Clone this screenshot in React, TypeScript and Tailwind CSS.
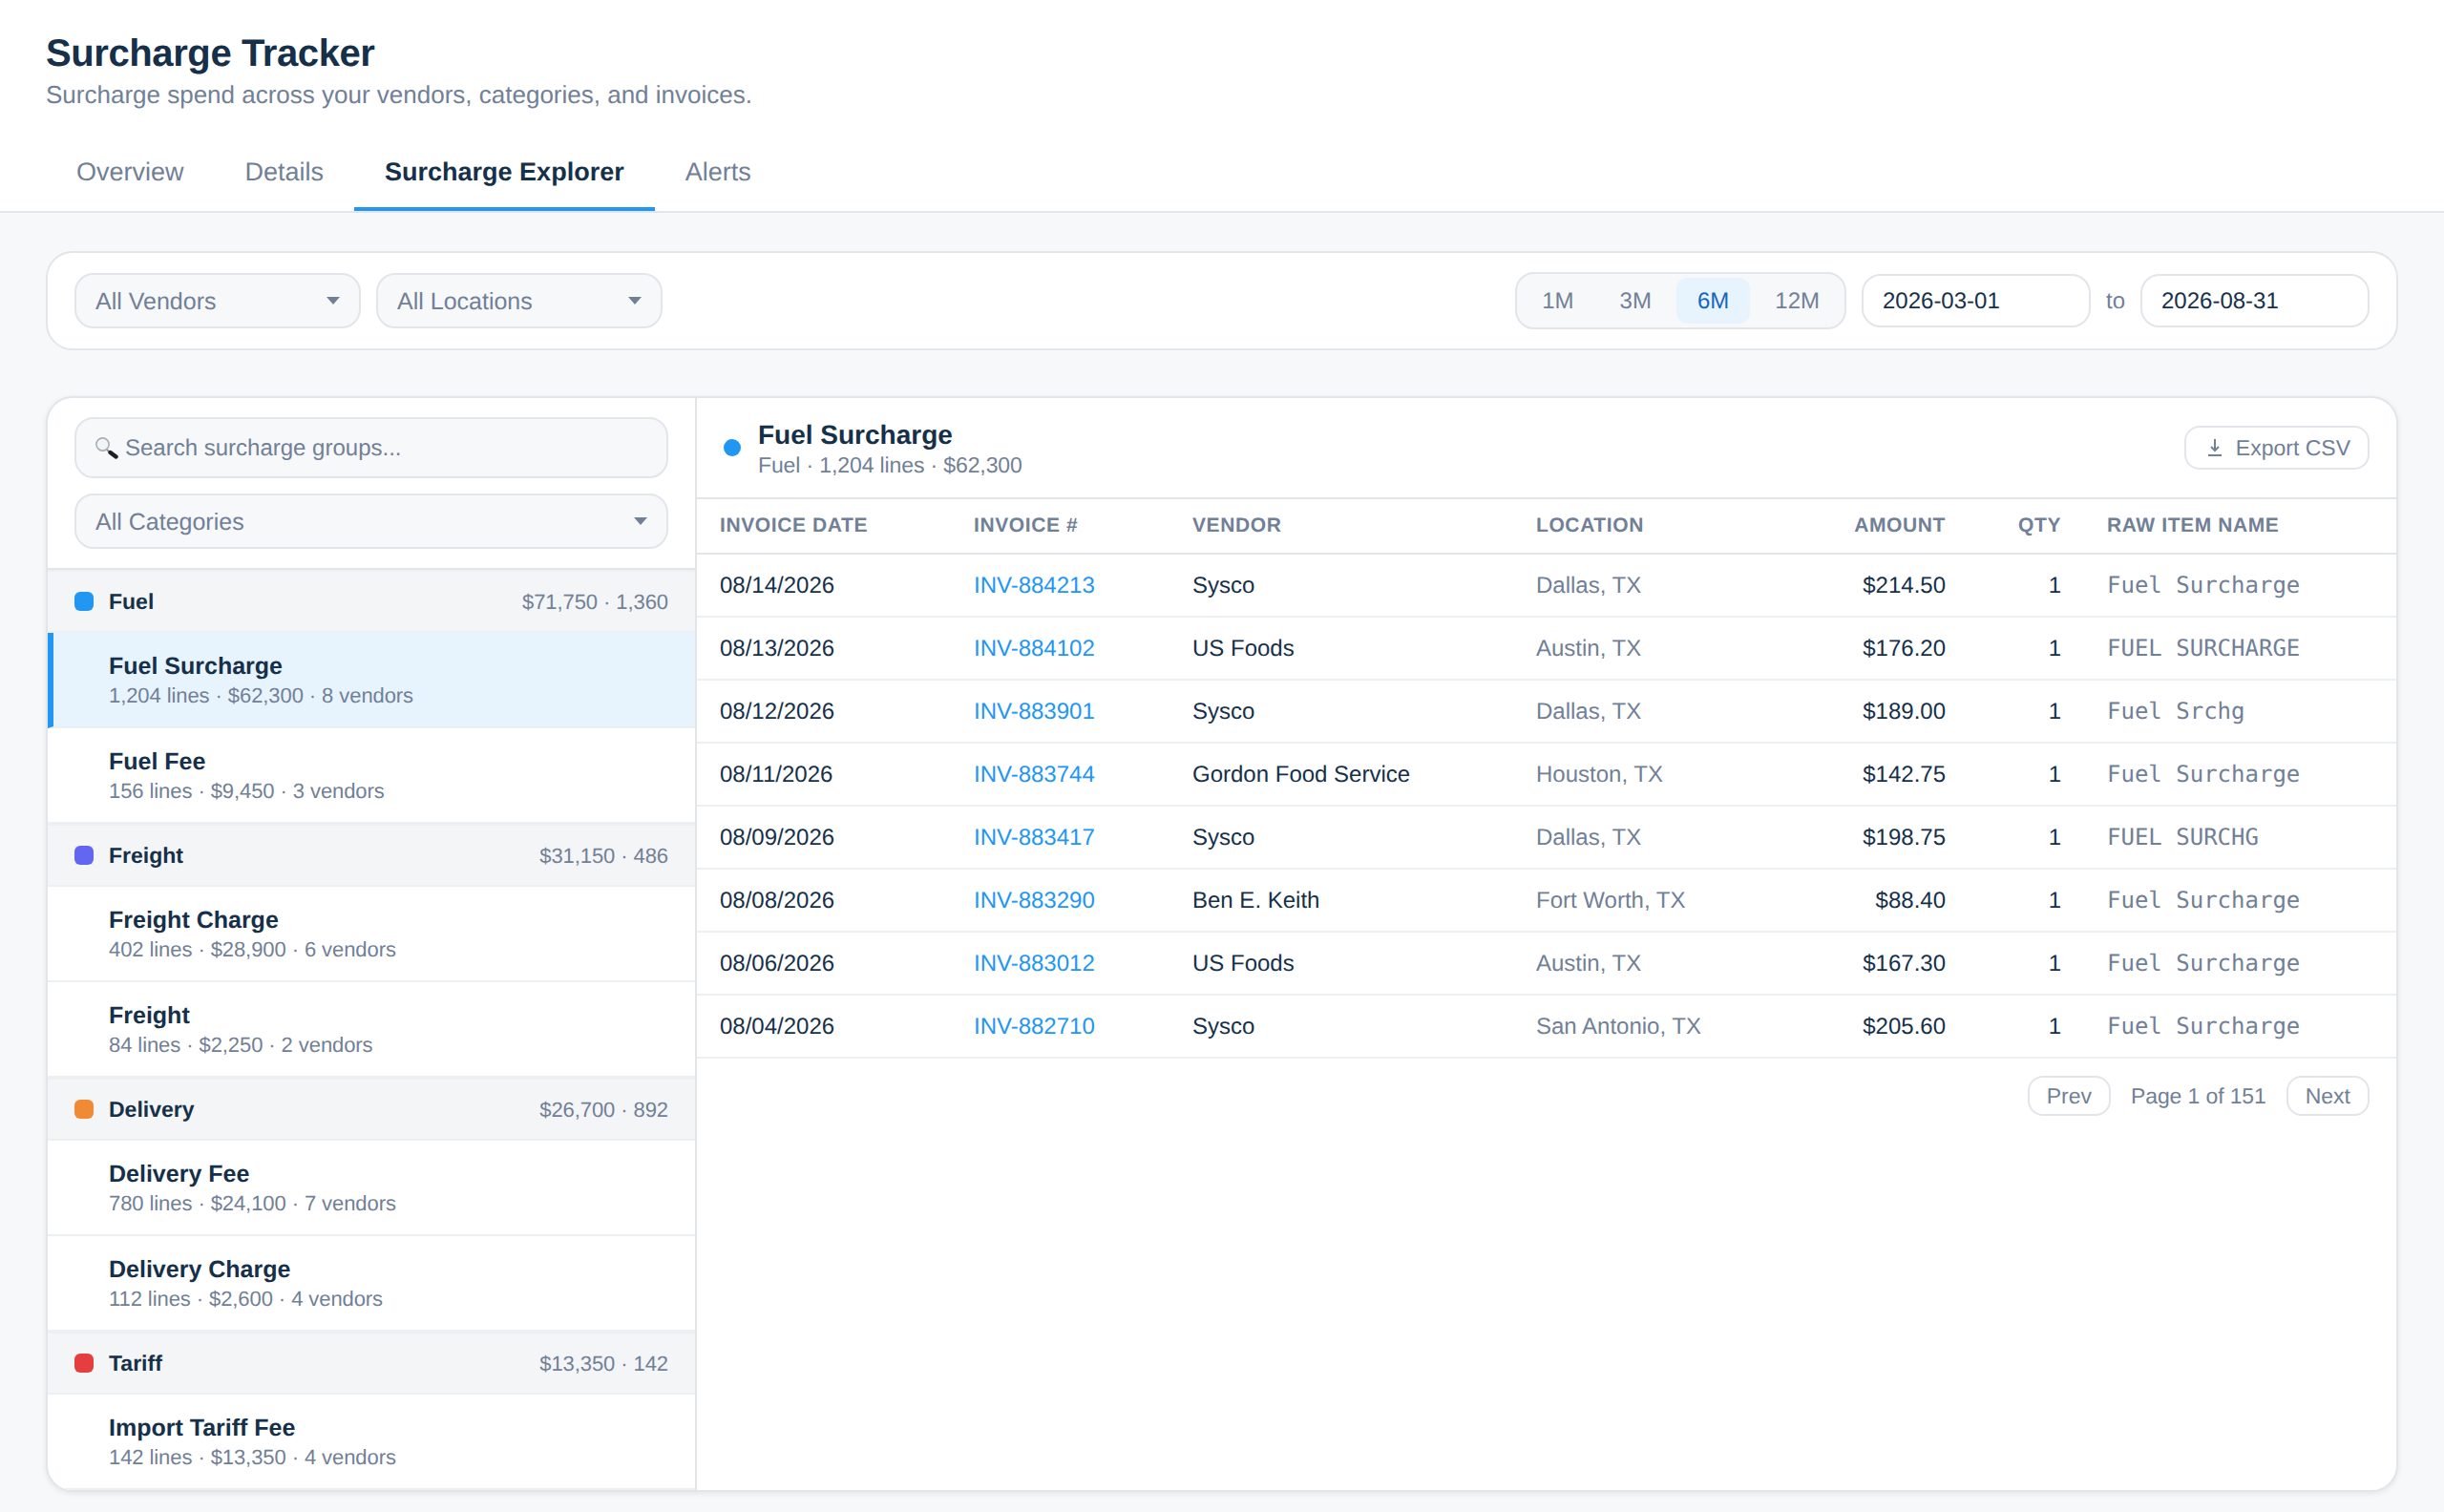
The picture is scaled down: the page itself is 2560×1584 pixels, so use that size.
const tabs = ['Overview', 'Details', 'Surcharge Explorer', 'Alerts'];
const periods = ['1M', '3M', '6M', '12M'];

const groups = [
  {
    name: 'Fuel',
    stats: '$71,750 · 1,360',
    dot: 'bg-[#2196f3]',
    items: [
      { name: 'Fuel Surcharge', meta: '1,204 lines · $62,300 · 8 vendors', active: true },
      { name: 'Fuel Fee', meta: '156 lines · $9,450 · 3 vendors' },
    ],
  },
  {
    name: 'Freight',
    stats: '$31,150 · 486',
    dot: 'bg-[#6366f1]',
    items: [
      { name: 'Freight Charge', meta: '402 lines · $28,900 · 6 vendors' },
      { name: 'Freight', meta: '84 lines · $2,250 · 2 vendors' },
    ],
  },
  {
    name: 'Delivery',
    stats: '$26,700 · 892',
    dot: 'bg-[#f08a34]',
    items: [
      { name: 'Delivery Fee', meta: '780 lines · $24,100 · 7 vendors' },
      { name: 'Delivery Charge', meta: '112 lines · $2,600 · 4 vendors' },
    ],
  },
  {
    name: 'Tariff',
    stats: '$13,350 · 142',
    dot: 'bg-[#e53e3e]',
    items: [{ name: 'Import Tariff Fee', meta: '142 lines · $13,350 · 4 vendors' }],
  },
];

const rows = [
  ['08/14/2026', 'INV-884213', 'Sysco', 'Dallas, TX', '$214.50', 'Fuel Surcharge'],
  ['08/13/2026', 'INV-884102', 'US Foods', 'Austin, TX', '$176.20', 'FUEL SURCHARGE'],
  ['08/12/2026', 'INV-883901', 'Sysco', 'Dallas, TX', '$189.00', 'Fuel Srchg'],
  ['08/11/2026', 'INV-883744', 'Gordon Food Service', 'Houston, TX', '$142.75', 'Fuel Surcharge'],
  ['08/09/2026', 'INV-883417', 'Sysco', 'Dallas, TX', '$198.75', 'FUEL SURCHG'],
  ['08/08/2026', 'INV-883290', 'Ben E. Keith', 'Fort Worth, TX', '$88.40', 'Fuel Surcharge'],
  ['08/06/2026', 'INV-883012', 'US Foods', 'Austin, TX', '$167.30', 'Fuel Surcharge'],
  ['08/04/2026', 'INV-882710', 'Sysco', 'San Antonio, TX', '$205.60', 'Fuel Surcharge'],
];

function Caret() {
  return (
    <svg width="14" height="8" viewBox="0 0 14 8" className="shrink-0">
      <path d="M0 0h14L7 8z" fill="#718096" />
    </svg>
  );
}

function SearchGlyph() {
  return (
    <svg width="24" height="23" viewBox="0 0 24 23" className="shrink-0">
      <path d="M12 13l3 3" stroke="#8f959b" strokeWidth="2" />
      <path d="M15.5 16l6 4.5" stroke="#1f1f22" strokeWidth="4.4" strokeLinecap="round" />
      <circle cx="7.5" cy="7.5" r="6.6" fill="#f1f5f8" stroke="#a9aeb4" strokeWidth="1.6" />
    </svg>
  );
}

function ExportGlyph() {
  return (
    <svg width="14" height="18" viewBox="0 0 14 18" fill="none" stroke="#718096" strokeWidth="2" className="shrink-0">
      <path d="M7 0v12M3 8l4 4 4-4M0 17h14" />
    </svg>
  );
}

function SelectBox({ label, className }: { label: string; className: string }) {
  return (
    <div className={`flex items-center justify-between rounded-[20px] border-2 border-[#e2e5ea] bg-[#f7f8fa] pl-[20px] pr-[20px] text-[25px] text-[#718096] ${className}`}>
      <span className="pt-[3px]">{label}</span>
      <Caret />
    </div>
  );
}

export default function App() {
  return (
    <div className="flex min-h-[1584px] flex-col bg-[#f7f8fa] font-['Liberation_Sans',sans-serif] text-[#16304a] [text-rendering:geometricPrecision]">
      {/* Header + tabs */}
      <header className="border-b-2 border-[#e2e5ea] bg-white px-[48px] pt-[32px]">
        <h1 className="text-[40px] leading-[48px] font-bold tracking-[-0.4px]">Surcharge Tracker</h1>
        <p className="mt-[3px] text-[26px] leading-[32px] text-[#718096]">
          Surcharge spend across your vendors, categories, and invoices.
        </p>
        <nav className="mt-[26px] flex">
          {tabs.map((tab) => (
            <div
              key={tab}
              className={`border-b-4 px-[32px] pt-[23px] pb-[21px] text-[27px] leading-[32px] ${
                tab === 'Surcharge Explorer'
                  ? 'border-[#2196f3] font-bold text-[#16304a]'
                  : 'border-transparent text-[#718096]'
              }`}
            >
              {tab}
            </div>
          ))}
        </nav>
      </header>

      <main className="px-[48px] pt-[40px]">
        {/* Filter bar */}
        <div className="flex items-center justify-between rounded-[28px] border-2 border-[#e2e5ea] bg-white px-[28px] py-[20px]">
          <div className="flex gap-[16px]">
            <SelectBox label="All Vendors" className="h-[58px] w-[300px]" />
            <SelectBox label="All Locations" className="h-[58px] w-[300px]" />
          </div>
          <div className="flex items-center">
            <div className="flex h-[60px] items-center gap-[4px] rounded-[20px] border-2 border-[#e2e5ea] bg-[#f7f8fa] p-[4px]">
              {periods.map((p) => (
                <div
                  key={p}
                  className={`flex h-[48px] items-center rounded-[12px] px-[22px] pt-[2px] text-[24px] ${
                    p === '6M' ? 'bg-[#e8f4fd] text-[#1565c0]' : 'text-[#718096]'
                  }`}
                >
                  {p}
                </div>
              ))}
            </div>
            <div className="ml-[16px] flex h-[56px] w-[240px] items-center rounded-[20px] border-2 border-[#e2e5ea] px-[20px] pt-[2px] text-[24px]">
              2026-03-01
            </div>
            <span className="mx-[16px] pt-[2px] text-[24px] text-[#718096]">to</span>
            <div className="flex h-[56px] w-[240px] items-center rounded-[20px] border-2 border-[#e2e5ea] px-[20px] pt-[2px] text-[24px]">
              2026-08-31
            </div>
          </div>
        </div>

        {/* Explorer panel */}
        <div className="mt-[48px] flex h-[1148px] overflow-hidden rounded-[28px] border-2 border-[#e2e5ea] bg-white shadow-[0_2px_6px_rgba(0,0,0,0.08)]">
          <aside className="w-[680px] shrink-0 border-r-2 border-[#e2e5ea]">
            <div className="flex h-[180px] flex-col gap-[16px] border-b-2 border-[#e2e5ea] px-[28px] pt-[20px]">
              <div className="flex h-[64px] items-center gap-[7px] rounded-[20px] border-2 border-[#e2e5ea] bg-[#f7f8fa] pr-[20px] pl-[20px] text-[24px] text-[#718096]">
                <SearchGlyph />
                <span className="pt-[2px]">Search surcharge groups...</span>
              </div>
              <SelectBox label="All Categories" className="h-[58px]" />
            </div>
            {groups.map((group) => (
              <div key={group.name}>
                <div className="flex h-[66px] items-center justify-between border-y-2 border-[#edf0f3] bg-[#f4f5f7] pr-[28px] pl-[28px]">
                  <div className="flex items-center gap-[16px]">
                    <span className={`h-[20px] w-[20px] rounded-[6px] ${group.dot}`} />
                    <span className="text-[23px] font-bold">{group.name}</span>
                  </div>
                  <span className="text-[22px] tracking-[-0.08px] text-[#718096]">{group.stats}</span>
                </div>
                {group.items.map((item) => (
                  <div
                    key={item.name}
                    className={`flex h-[100px] flex-col justify-center border-b-2 pr-[28px] ${
                      item.active
                        ? 'border-l-[6px] border-b-[#edf0f3] border-l-[#2196f3] bg-[#e8f4fd] pl-[58px]'
                        : 'border-[#edf0f3] pl-[64px]'
                    }`}
                  >
                    <div className="text-[25px] leading-[34px] font-bold">{item.name}</div>
                    <div className="text-[22px] leading-[28px] tracking-[-0.08px] text-[#718096]">{item.meta}</div>
                  </div>
                ))}
              </div>
            ))}
          </aside>

          <section className="min-w-0 flex-1">
            <div className="flex h-[106px] items-center justify-between border-b-2 border-[#e2e5ea] pr-[28px] pl-[28px]">
              <div className="flex items-center gap-[18px]">
                <span className="h-[18px] w-[18px] rounded-full bg-[#2196f3]" />
                <div className="pt-[2px]">
                  <div className="text-[28px] leading-[34px] font-bold">Fuel Surcharge</div>
                  <div className="text-[23px] leading-[28px] tracking-[-0.12px] text-[#718096]">Fuel · 1,204 lines · $62,300</div>
                </div>
              </div>
              <div className="flex h-[46px] items-center gap-[15px] rounded-[16px] border-2 border-[#e2e5ea] pr-[18px] pl-[23px] text-[23px] text-[#718096]">
                <ExportGlyph />
                Export CSV
              </div>
            </div>

            <table className="w-full table-fixed border-collapse">
              <colgroup>
                <col className="w-[266px]" />
                <col className="w-[229px]" />
                <col className="w-[360px]" />
                <col className="w-[333px]" />
                <col className="w-[144px]" />
                <col className="w-[121px]" />
                <col />
              </colgroup>
              <thead>
                <tr className="h-[57px] border-b-2 border-[#e2e5ea] text-[21px] font-bold tracking-[0.6px] text-[#718096] uppercase">
                  <th className="px-[24px] text-left">Invoice Date</th>
                  <th className="px-[24px] text-left">Invoice #</th>
                  <th className="px-[24px] text-left">Vendor</th>
                  <th className="px-[24px] text-left">Location</th>
                  <th className="px-[24px] text-right">Amount</th>
                  <th className="px-[24px] text-right">Qty</th>
                  <th className="px-[24px] text-left">Raw Item Name</th>
                </tr>
              </thead>
              <tbody>
                {rows.map((row) => (
                  <tr key={row[1]} className="h-[66px] border-b-2 border-[#edf0f3] text-[24px]">
                    <td className="px-[24px] pt-[2px]">{row[0]}</td>
                    <td className="px-[24px] pt-[2px] text-[#2196f3]">{row[1]}</td>
                    <td className="px-[24px] pt-[2px]">{row[2]}</td>
                    <td className="px-[24px] pt-[2px] text-[#718096]">{row[3]}</td>
                    <td className="px-[24px] pt-[2px] text-right">{row[4]}</td>
                    <td className="px-[24px] pt-[2px] text-right">1</td>
                    <td className="px-[24px] font-['DejaVu_Sans_Mono',monospace] text-[24px] text-[#718096]">{row[5]}</td>
                  </tr>
                ))}
              </tbody>
            </table>

            <div className="flex items-center justify-end gap-[21px] px-[28px] pt-[18px] text-[23px] text-[#718096]">
              <div className="flex h-[42px] items-center rounded-[16px] border-2 border-[#e2e5ea] px-[18px]">Prev</div>
              <span className="tracking-[-0.12px]">Page 1 of 151</span>
              <div className="flex h-[42px] items-center rounded-[16px] border-2 border-[#e2e5ea] px-[18px]">Next</div>
            </div>
          </section>
        </div>
      </main>
    </div>
  );
}
